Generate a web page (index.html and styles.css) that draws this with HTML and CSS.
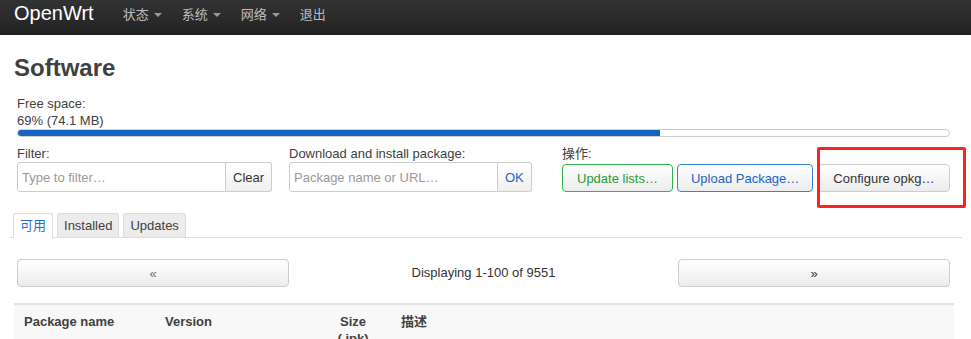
FILE: index.html
```html
<!DOCTYPE html>
<html lang="zh-CN">
<head>
<meta charset="utf-8">
<title>Software - OpenWrt</title>
<link rel="stylesheet" href="styles.css">
</head>
<body>
<header class="topbar">
  <a class="brand" href="#">OpenWrt</a>
  <ul class="nav">
    <li class="nav-item">状态<span class="caret"></span></li>
    <li class="nav-item">系统<span class="caret"></span></li>
    <li class="nav-item">网络<span class="caret"></span></li>
    <li class="nav-item">退出</li>
  </ul>
</header>
<main class="content">
  <h2 class="title">Software</h2>
  <div class="freespace">
    <div class="line">Free space:</div>
    <div class="line">69% (74.1 MB)</div>
    <div class="bar"><div class="fill" style="width:69%"></div></div>
  </div>
  <div class="controls">
    <div class="ctl">
      <label class="ctl-label">Filter:</label>
      <div class="group">
        <input class="text-input" type="text" placeholder="Type to filter…">
        <button class="addon">Clear</button>
      </div>
    </div>
    <div class="ctl">
      <label class="ctl-label">Download and install package:</label>
      <div class="group">
        <input class="text-input" type="text" placeholder="Package name or URL…">
        <button class="addon addon-blue">OK</button>
      </div>
    </div>
    <div class="ctl">
      <label class="ctl-label">操作:</label>
      <div class="btns">
        <button class="btn btn-green">Update lists…</button>
        <button class="btn btn-blue">Upload Package…</button>
        <span class="hl"><button class="btn">Configure opkg…</button></span>
      </div>
    </div>
  </div>
  <ul class="tabs">
    <li class="tab active">可用</li>
    <li class="tab">Installed</li>
    <li class="tab">Updates</li>
  </ul>
  <div class="pager">
    <button class="btn pbtn prev">«</button>
    <div class="pinfo">Displaying 1-100 of 9551</div>
    <button class="btn pbtn">»</button>
  </div>
  <table class="pkgs">
    <colgroup>
      <col class="c-name"><col class="c-ver"><col class="c-size"><col>
    </colgroup>
    <thead>
      <tr>
        <th>Package name</th>
        <th>Version</th>
        <th class="center">Size (.ipk)</th>
        <th>描述</th>
      </tr>
    </thead>
  </table>
</main>
</body>
</html>
```
FILE: styles.css
```css
* { box-sizing: border-box; }

body {
  margin: 0;
  font-family: "Liberation Sans", Arial, "Noto Sans CJK SC", sans-serif;
  font-size: 13px;
  color: #404040;
  background: #fff;
}

.topbar {
  height: 35px;
  background: linear-gradient(#333333, #222222);
  display: flex;
  align-items: flex-start;
  padding-left: 14px;
}

.brand {
  color: #fff;
  font-size: 20px;
  line-height: 23px;
  padding-top: 2px;
  margin-right: 19px;
  text-decoration: none;
}

.nav {
  display: flex;
  list-style: none;
  margin: 0;
  padding: 6px 0 0;
}

.nav-item {
  padding: 0 10px;
  color: #bdbdbd;
  line-height: 17px;
  display: flex;
  align-items: center;
}

.caret {
  width: 0;
  height: 0;
  margin-left: 5px;
  border-top: 4px solid #9a9a9a;
  border-left: 4px solid transparent;
  border-right: 4px solid transparent;
}

.content {
  padding: 20px 17px 0 14px;
}

.title {
  margin: 0;
  font-size: 24px;
  line-height: 26px;
  font-weight: bold;
  color: #404040;
}

.freespace {
  margin: 14px 4px 0 3px;
}

.line { line-height: 17px; }

.bar {
  height: 8px;
  border: 1px solid #cccccc;
  border-radius: 4px;
  overflow: hidden;
  background: #fff;
}

.fill {
  height: 100%;
  background: #1565c0;
}

.controls {
  display: grid;
  grid-template-columns: 272px 273px 1fr;
  margin: 9px 4px 0 3px;
}

.ctl-label {
  display: block;
  line-height: 16px;
}

.group { display: flex; }

.text-input {
  width: 209px;
  height: 30px;
  border: 1px solid #cccccc;
  border-radius: 3px 0 0 3px;
  padding: 0 4px;
  font: inherit;
  color: #404040;
  outline: none;
}

.text-input::placeholder { color: #999999; }

.addon {
  height: 30px;
  padding: 0 7px;
  border: 1px solid #cccccc;
  border-left: none;
  border-radius: 0 3px 3px 0;
  background: linear-gradient(#ffffff, #f0f0f0);
  font: inherit;
  color: #333;
}

.addon-blue { color: #1a66c4; }

.btns {
  display: flex;
  gap: 4px;
  margin-top: 2px;
}

.btn {
  height: 28px;
  padding: 0 14px;
  border: 1px solid #cccccc;
  border-radius: 4px;
  background: linear-gradient(#ffffff, #ececec);
  font: inherit;
  color: #333;
  white-space: nowrap;
  flex-shrink: 0;
}

.btn-green {
  border-color: #35b24a;
  color: #2a9c3c;
}

.btn-blue {
  padding: 0 13px;
  border-color: #3584d9;
  color: #1d63c4;
}

.hl {
  position: relative;
  display: inline-block;
  margin-left: 1px;
  flex-shrink: 0;
}

.hl::after {
  content: "";
  position: absolute;
  left: -1px;
  top: -17px;
  width: 143px;
  height: 55px;
  border: 3px solid #ff2222;
  border-radius: 2px;
  pointer-events: none;
}

.tabs {
  display: flex;
  gap: 4px;
  list-style: none;
  margin: 21px -8px 0 -5px;
  padding: 0 0 0 4px;
  border-bottom: 1px solid #dddddd;
}

.tab {
  padding: 3px 6px;
  line-height: 17px;
  border: 1px solid #dddddd;
  border-bottom: none;
  border-radius: 3px 3px 0 0;
  background: #ececec;
}

.tab.active {
  background: #fff;
  color: #1f6fd0;
  padding-bottom: 4px;
  margin-bottom: -1px;
}

.pager {
  display: grid;
  grid-template-columns: 272px 1fr 272px;
  align-items: center;
  margin: 21px 4px 0 3px;
}

.pbtn { width: 100%; }
.prev { color: #6a6a8a; }

.pinfo {
  text-align: center;
  line-height: 28px;
  color: #333;
}

.pkgs {
  width: 100%;
  margin-top: 16px;
  border-collapse: collapse;
  table-layout: fixed;
}

.c-name { width: 141px; }
.c-ver { width: 160px; }
.c-size { width: 76px; }

.pkgs th {
  background: #f8f8f8;
  border-top: 2px solid #e2e2e2;
  padding: 8px 10px 10px;
  line-height: 17px;
  text-align: left;
  vertical-align: top;
  font-weight: bold;
  color: #404040;
}

.pkgs th.center { text-align: center; }
```
